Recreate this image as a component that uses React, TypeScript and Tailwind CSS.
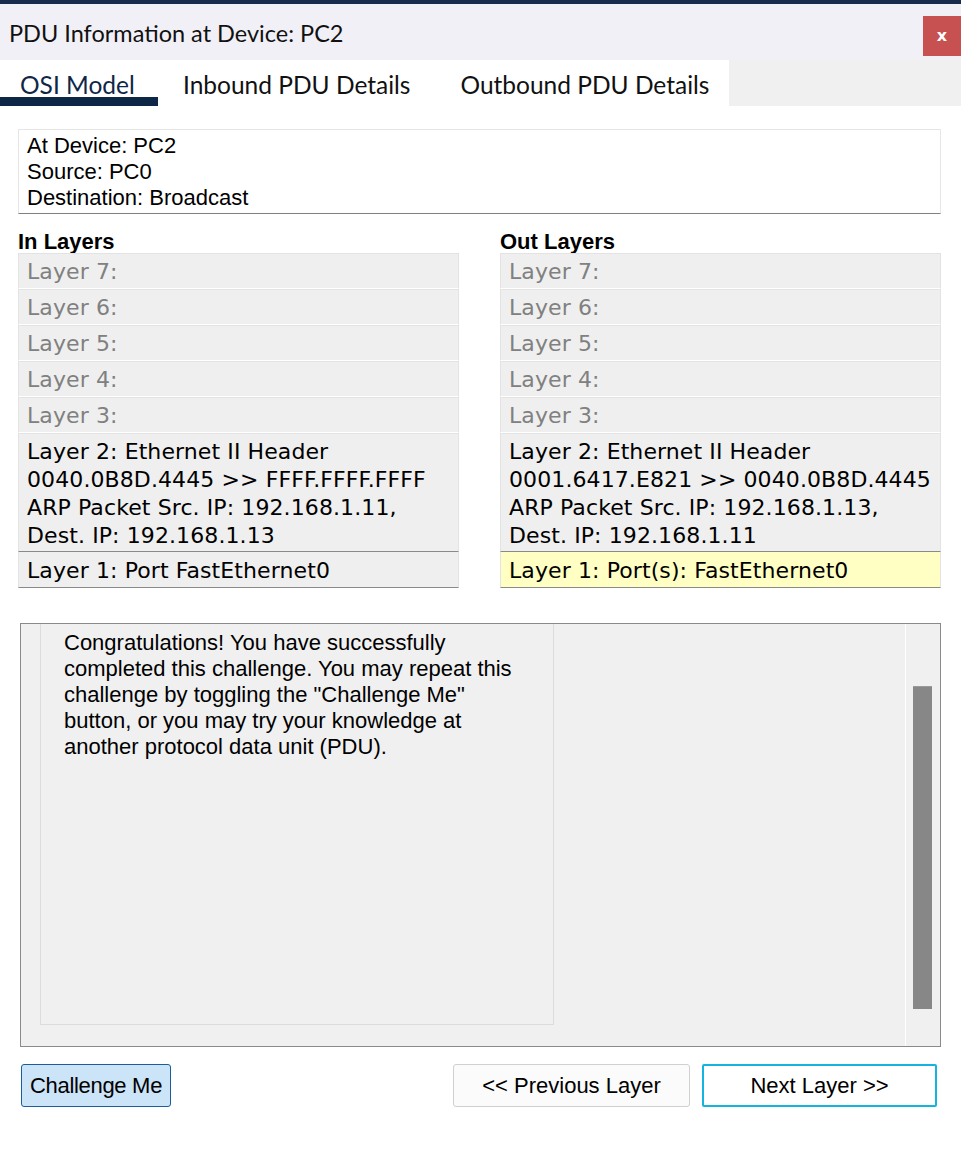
const upperLayers = ['Layer 7:', 'Layer 6:', 'Layer 5:', 'Layer 4:', 'Layer 3:']

type Side = {
    title: string
    l2: string[]
    l1: string
    highlight?: boolean
}

const inSide: Side = {
    title: 'In Layers',
    l2: [
        'Layer 2: Ethernet II Header',
        '0040.0B8D.4445 >> FFFF.FFFF.FFFF',
        'ARP Packet Src. IP: 192.168.1.11,',
        'Dest. IP: 192.168.1.13',
    ],
    l1: 'Layer 1: Port FastEthernet0',
}

const outSide: Side = {
    title: 'Out Layers',
    l2: [
        'Layer 2: Ethernet II Header',
        '0001.6417.E821 >> 0040.0B8D.4445',
        'ARP Packet Src. IP: 192.168.1.13,',
        'Dest. IP: 192.168.1.11',
    ],
    l1: 'Layer 1: Port(s): FastEthernet0',
    highlight: true,
}

function LayerColumn({ side }: { side: Side }) {
    return (
        <div className="w-[441px] flex flex-col">
            <div className="h-[24px] flex items-center font-['Liberation_Sans',sans-serif] font-bold text-[22px] text-black">
                {side.title}
            </div>
            <div className="flex flex-col font-['DejaVu_Sans',sans-serif] text-[22px] tracking-[0.1px]">
                {upperLayers.map((l) => (
                    <div
                        key={l}
                        className="h-[36px] border border-[#e3e3e3] border-b-white bg-[#efefef] pl-[8px] flex items-center text-[#808080]"
                    >
                        {l}
                    </div>
                ))}
                <div className="h-[119px] border border-[#e3e3e3] border-b-[#8a8a8a] bg-[#efefef] pl-[8px] pt-[4px] text-black leading-[28px]">
                    {side.l2.map((t) => (
                        <div key={t} className="whitespace-nowrap">{t}</div>
                    ))}
                </div>
                <div
                    className={`h-[36px] border border-[#e3e3e3] border-t-0 border-b-[#8a8a8a] pl-[8px] pt-[2px] flex items-center text-black ${side.highlight ? 'bg-[#ffffc4]' : 'bg-[#efefef]'
                        }`}
                >
                    {side.l1}
                </div>
            </div>
        </div>
    )
}

export default function App() {
    return (
        <div className="w-[961px] h-[1163px] bg-white flex flex-col overflow-hidden">
            <div className="h-[4px] bg-[#182b4c]" />
            {/* title bar */}
            <div className="h-[56px] bg-[#f2f0f7] flex justify-between">
                <div className="self-center pl-[9px] pt-[3px] font-['Lato',sans-serif] text-[23.5px] text-[#111]">
                    PDU Information at Device: PC2
                </div>
                <div className="self-end mb-[4px] w-[38px] h-[40px] bg-[#c75050] flex items-center justify-center text-white font-['DejaVu_Sans',sans-serif] text-[16px] font-bold">
                    x
                </div>
            </div>
            {/* tabs */}
            <div className="h-[46px] flex">
                <div className="w-[729px] bg-white flex items-stretch font-['Lato',sans-serif] text-[24.5px] leading-none">
                    <div className="w-[158px] h-[46px] flex flex-col">
                        <div className="h-[37px] flex items-center pl-[20px] pt-[13px] text-[#0f2747]">OSI Model</div>
                        <div className="h-[9px] bg-[#0f2747]" />
                    </div>
                    <div className="flex items-center pl-[25px] pt-[5px] text-[#111]">Inbound PDU Details</div>
                    <div className="flex items-center pl-[50px] pt-[5px] text-[#111]">Outbound PDU Details</div>
                </div>
                <div className="flex-1 bg-[#f0f0f0]" />
            </div>

            <div className="w-[923px] ml-[18px] flex flex-col pt-[23px]">
                {/* info box */}
                <div className="h-[85px] border border-[#e6e6e6] border-b-[#808080] pl-[8px] pt-[3px] font-['Liberation_Sans',sans-serif] text-[22px] leading-[26px] text-black">
                    <div>At Device: PC2</div>
                    <div>Source: PC0</div>
                    <div>Destination: Broadcast</div>
                </div>

                <div className="flex justify-between mt-[15px]">
                    <LayerColumn side={inSide} />
                    <LayerColumn side={outSide} />
                </div>

                {/* message */}
                <div className="ml-[2px] mt-[35px] w-[921px] h-[424px] border border-[#8a8a8a] bg-[#f0f0f0] flex overflow-hidden">
                    <div className="ml-[19px] -mt-[1px] w-[514px] h-[402px] border border-[#dcdcdc] pl-[23px] pr-[20px] pt-[6px] font-['Liberation_Sans',sans-serif] text-[22px] leading-[26px] text-black">
                        Congratulations! You have successfully completed this challenge. You may repeat this
                        challenge by toggling the "Challenge Me" button, or you may try your knowledge at another
                        protocol data unit (PDU).
                    </div>
                    <div className="flex-1" />
                    <div className="w-[35px] border-l border-white pt-[62px] pl-[7px]">
                        <div className="w-[19px] h-[323px] bg-[#878787] border-t border-[#9a9a9a]" />
                    </div>
                </div>

                {/* buttons */}
                <div className="mt-[17px] flex items-center font-['Liberation_Sans',sans-serif] text-[22px] text-black">
                    <button className="ml-[3px] w-[150px] h-[43px] bg-[#cce4f7] border border-[#1c5e9c] rounded-[3px] tracking-[-0.3px]">
                        Challenge Me
                    </button>
                    <div className="flex-1" />
                    <button className="w-[237px] h-[43px] bg-[#fbfbfb] border border-[#d0d0d0] rounded-[3px]">
                        &lt;&lt; Previous Layer
                    </button>
                    <button className="ml-[12px] mr-[4px] w-[235px] h-[43px] bg-white border-2 border-[#14b4e0] rounded-[2px]">
                        Next Layer &gt;&gt;
                    </button>
                </div>
            </div>
        </div>
    )
}
